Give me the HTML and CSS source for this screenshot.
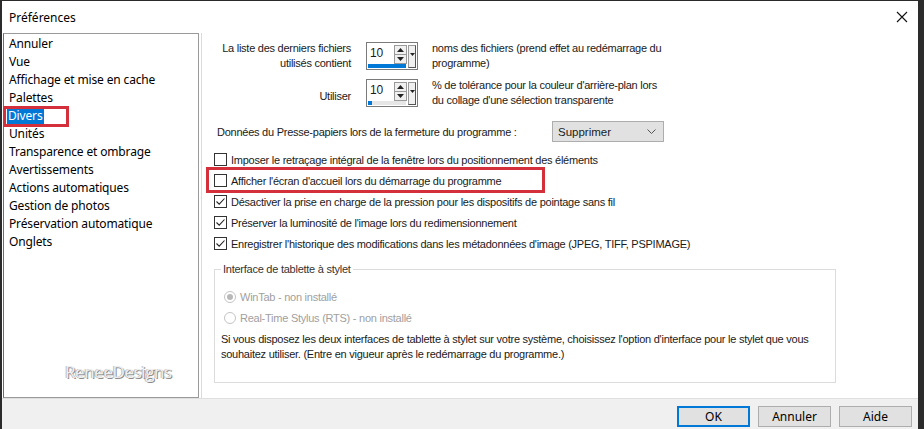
FILE: index.html
```html
<!DOCTYPE html>
<html lang="fr">
<head>
    <meta charset="UTF-8">
    <title>Préférences</title>
    <link rel="stylesheet" href="styles.css">
</head>
<body>
    <div class="window">
        <div class="titlebar">
            <span class="title">Préférences</span>
            <svg class="close" width="12" height="12" viewBox="0 0 12 12">
                <path d="M1 1 L11 11 M11 1 L1 11" stroke="#111" stroke-width="1.1" fill="none"/>
            </svg>
        </div>

        <div class="main">
            <ul class="nav">
                <li>Annuler</li>
                <li>Vue</li>
                <li>Affichage et mise en cache</li>
                <li>Palettes</li>
                <li class="marked"><span class="selected">Divers</span></li>
                <li>Unités</li>
                <li>Transparence et ombrage</li>
                <li>Avertissements</li>
                <li>Actions automatiques</li>
                <li>Gestion de photos</li>
                <li>Préservation automatique</li>
                <li>Onglets</li>
                <li class="watermark">ReneeDesigns</li>
            </ul>

            <div class="panel">
                <div class="spin-row">
                    <div class="spin-label">La liste des derniers fichiers<br>utilisés contient</div>
                    <div class="spin">
                        <span class="spin-value">10</span>
                        <span class="spin-arrows">
                            <span class="arr"><svg width="7" height="4" viewBox="0 0 7 4"><path d="M0 4 L3.5 0 L7 4 Z" fill="#222"/></svg></span>
                            <span class="arr"><svg width="7" height="4" viewBox="0 0 7 4"><path d="M0 0 L3.5 4 L7 0 Z" fill="#222"/></svg></span>
                        </span>
                        <span class="spin-drop"><svg width="5" height="3" viewBox="0 0 5 3"><path d="M0 0 L2.5 3 L5 0 Z" fill="#222"/></svg></span>
                        <span class="spin-bar"><span class="spin-fill" style="width: 100%"></span></span>
                    </div>
                    <div class="spin-desc">noms des fichiers (prend effet au redémarrage du<br>programme)</div>
                </div>

                <div class="spin-row second">
                    <div class="spin-label low">Utiliser</div>
                    <div class="spin">
                        <span class="spin-value">10</span>
                        <span class="spin-arrows">
                            <span class="arr"><svg width="7" height="4" viewBox="0 0 7 4"><path d="M0 4 L3.5 0 L7 4 Z" fill="#222"/></svg></span>
                            <span class="arr"><svg width="7" height="4" viewBox="0 0 7 4"><path d="M0 0 L3.5 4 L7 0 Z" fill="#222"/></svg></span>
                        </span>
                        <span class="spin-drop"><svg width="5" height="3" viewBox="0 0 5 3"><path d="M0 0 L2.5 3 L5 0 Z" fill="#222"/></svg></span>
                        <span class="spin-bar"><span class="spin-fill" style="width: 10%"></span></span>
                    </div>
                    <div class="spin-desc">% de tolérance pour la couleur d'arrière-plan lors<br>du collage d'une sélection transparente</div>
                </div>

                <div class="clip-row">
                    <span class="clip-label">Données du Presse-papiers lors de la fermeture du programme :</span>
                    <div class="select">
                        <span>Supprimer</span>
                        <svg width="9" height="5" viewBox="0 0 9 5"><path d="M0.5 0.5 L4.5 4.5 L8.5 0.5" stroke="#555" stroke-width="1" fill="none"/></svg>
                    </div>
                </div>

                <div class="checks">
                    <label class="check"><span class="box"></span>Imposer le retraçage intégral de la fenêtre lors du positionnement des éléments</label>
                    <label class="check marked"><span class="box"></span>Afficher l'écran d'accueil lors du démarrage du programme</label>
                    <label class="check"><span class="box"><svg width="11" height="11" viewBox="0 0 11 11"><path d="M1.5 5.5 L4.2 8.2 L9.5 2.5" stroke="#222" stroke-width="1.1" fill="none"/></svg></span>Désactiver la prise en charge de la pression pour les dispositifs de pointage sans fil</label>
                    <label class="check"><span class="box"><svg width="11" height="11" viewBox="0 0 11 11"><path d="M1.5 5.5 L4.2 8.2 L9.5 2.5" stroke="#222" stroke-width="1.1" fill="none"/></svg></span>Préserver la luminosité de l'image lors du redimensionnement</label>
                    <label class="check"><span class="box"><svg width="11" height="11" viewBox="0 0 11 11"><path d="M1.5 5.5 L4.2 8.2 L9.5 2.5" stroke="#222" stroke-width="1.1" fill="none"/></svg></span>Enregistrer l'historique des modifications dans les métadonnées d'image (JPEG, TIFF, PSPIMAGE)</label>
                </div>

                <fieldset class="group">
                    <legend>Interface de tablette à stylet</legend>
                    <div class="radio"><span class="dot checked"></span>WinTab - non installé</div>
                    <div class="radio"><span class="dot"></span>Real-Time Stylus (RTS) - non installé</div>
                    <p class="note">Si vous disposez les deux interfaces de tablette à stylet sur votre système, choisissez l'option d'interface pour le stylet que vous<br>souhaitez utiliser. (Entre en vigueur après le redémarrage du programme.)</p>
                </fieldset>
            </div>
        </div>

        <div class="buttons">
            <button class="default">OK</button>
            <button>Annuler</button>
            <button>Aide</button>
        </div>
    </div>
</body>
</html>
```

FILE: styles.css
```css
body {
    margin: 0;
    padding: 1px 6px 0 2px;
    background-color: #2b2b2b;
    font-family: "Liberation Sans", Arial, sans-serif;
    color: #1a1a1a;
}

.window {
    width: 916px;
    height: 428px;
    background-color: white;
    display: flex;
    flex-direction: column;
}

.titlebar {
    height: 32px;
    display: flex;
    align-items: center;
    justify-content: space-between;
    padding: 0 10px 0 7px;
    font-family: "Noto Sans", sans-serif;
    font-size: 12px;
    color: #000;
}

.main {
    height: 365px;
    display: flex;
    padding-left: 1px;
}

/* left category list */
.nav {
    list-style: none;
    margin: 0;
    padding: 1px 0 0 5px;
    width: 196px;
    box-sizing: border-box;
    border: 1px solid #9a9a9a;
    border-left-color: #6d6d6d;
    display: flex;
    flex-direction: column;
    font-family: "Noto Sans", sans-serif;
    font-size: 12px;
    letter-spacing: -0.15px;
    color: #000;
}

.nav li {
    height: 18px;
    line-height: 18px;
    white-space: nowrap;
}

.nav .marked {
    position: relative;
}

.nav .marked::after {
    content: "";
    position: absolute;
    left: -6px;
    top: -1px;
    width: 60px;
    height: 15px;
    border: 3px solid #d3303c;
}

.selected {
    display: inline-block;
    margin-left: -2px;
    padding: 0 1px;
    line-height: 16px;
    background-color: #0078d7;
    color: white;
}

.nav .watermark {
    margin-top: auto;
    margin-bottom: 15px;
    padding-left: 56px;
    height: 20px;
    line-height: 20px;
    font-family: "Open Sans", sans-serif;
    font-size: 17px;
    letter-spacing: -0.4px;
    color: #eeeeee;
    text-shadow: 1px 1px 0 #8c8c8c, -1px 0 0 #bcbcbc;
}

/* right settings panel */
.panel {
    flex: 1;
    margin-left: 2px;
    border-left: 1px solid #dadada;
    padding: 8px 0 0 12px;
    font-size: 11px;
    letter-spacing: -0.25px;
}

.spin-row {
    display: grid;
    grid-template-columns: 137px 52px auto;
    column-gap: 15px;
    align-items: center;
    line-height: 15px;
}

.spin-row.second {
    margin-top: 7px;
}

.spin-label {
    text-align: right;
}

.spin-label.low {
    padding-top: 7px;
}

.spin-desc {
    margin-left: -1px;
}

.spin {
    height: 28px;
    box-sizing: border-box;
    border: 1px solid #7a7a7a;
    display: grid;
    grid-template-columns: 1fr 13px 9px;
    grid-template-rows: 1fr 6px;
    padding: 1px 1px 0 2px;
}

.spin-value {
    font-size: 12px;
    line-height: 18px;
    padding-left: 1px;
}

.spin-arrows {
    display: flex;
    flex-direction: column;
    margin-top: 1px;
}

.arr {
    height: 8px;
    border: 1px solid #9a9a9a;
    background-color: #f0f0f0;
    display: flex;
    align-items: center;
    justify-content: center;
}

.arr + .arr {
    border-top: none;
}

.spin-drop {
    grid-row: 1 / 3;
    grid-column: 3;
    margin: 1px 0 2px 1px;
    border: 1px solid #9a9a9a;
    border-right-color: #555;
    border-bottom-color: #555;
    background-color: #f0f0f0;
    display: flex;
    justify-content: center;
    padding-top: 7px;
}

.spin-bar {
    grid-column: 1 / 3;
    margin: 0 1px 2px -1px;
    background-color: #e6e6e6;
}

.spin-fill {
    display: block;
    height: 100%;
    background-color: #0078d7;
}

.clip-row {
    display: grid;
    grid-template-columns: 338px 112px;
    align-items: center;
    margin-top: 13px;
}

.clip-label {
    padding-left: 3px;
}

.select {
    height: 21px;
    box-sizing: border-box;
    border: 1px solid #adadad;
    background-color: #e1e1e1;
    display: flex;
    align-items: center;
    justify-content: space-between;
    padding: 0 7px 0 5px;
    font-size: 11.5px;
    letter-spacing: 0;
}

.checks {
    margin-top: 7px;
    display: flex;
    flex-direction: column;
}

.check {
    height: 21px;
    display: flex;
    align-items: center;
    gap: 4px;
    white-space: nowrap;
}

.check.marked {
    position: relative;
    width: 332px;
}

.check.marked::after {
    content: "";
    position: absolute;
    left: -8px;
    top: -3px;
    width: 333px;
    height: 20px;
    border: 3px solid #d3303c;
}

.box {
    width: 13px;
    height: 13px;
    box-sizing: border-box;
    border: 1px solid #333;
    background-color: white;
    display: flex;
    align-items: center;
    justify-content: center;
}

.group {
    margin: 8px 0 0 0;
    width: 622px;
    box-sizing: border-box;
    border: 1px solid #dcdcdc;
    padding: 0 0 20px 6px;
}

.group legend {
    padding: 0 2px;
    line-height: 14px;
    color: #333;
}

.radio {
    height: 21px;
    display: flex;
    align-items: center;
    gap: 4px;
    margin-left: 3px;
    color: #a0a0a0;
}

.radio:first-of-type {
    margin-top: 10px;
}

.dot {
    width: 12px;
    height: 12px;
    box-sizing: border-box;
    border: 1px solid #c4c4c4;
    border-radius: 50%;
    display: flex;
    align-items: center;
    justify-content: center;
}

.dot.checked::after {
    content: "";
    width: 6px;
    height: 6px;
    border-radius: 50%;
    background-color: #b8b8b8;
}

.note {
    margin: 4px 0 0 0;
    line-height: 15px;
    white-space: nowrap;
}

/* bottom buttons */
.buttons {
    flex: 1;
    border-top: 1px solid #dfdfdf;
    background-color: #f0f0f0;
    display: flex;
    justify-content: flex-end;
    align-items: flex-start;
    gap: 8px;
    padding: 7px 6px 0 0;
}

button {
    width: 73px;
    height: 21px;
    border: 1px solid #adadad;
    background-color: #e1e1e1;
    font-family: "Noto Sans", sans-serif;
    font-size: 12px;
    padding: 0;
    color: #000;
}

button.default {
    border: 2px solid #0078d7;
}
```
